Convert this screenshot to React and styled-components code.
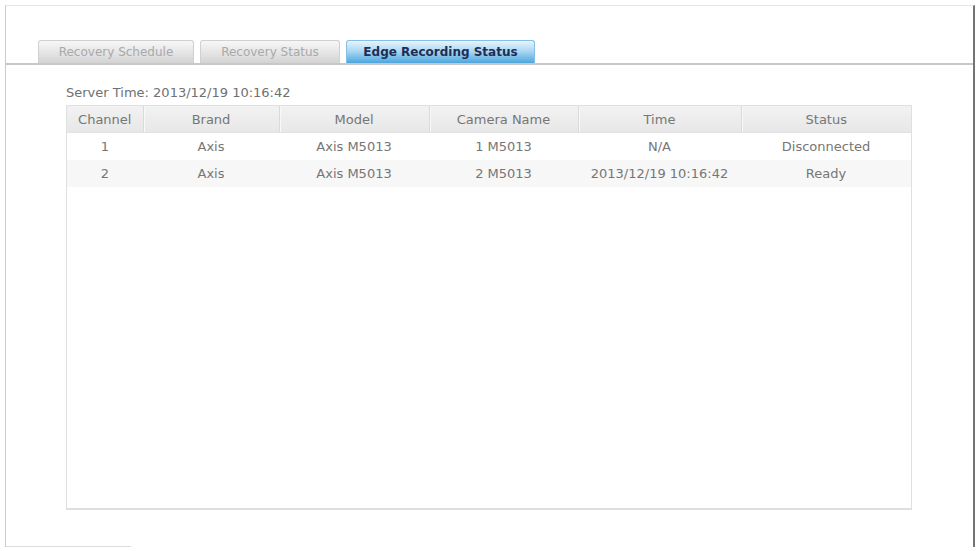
import styled, { createGlobalStyle } from "styled-components";

const GlobalStyle = createGlobalStyle`
  html, body {
    margin: 0;
    padding: 0;
    background: #ffffff;
  }
  body {
    font-family: "DejaVu Sans", Verdana, sans-serif;
  }
`;

const tabs = [
  { label: "Recovery Schedule", width: 156 },
  { label: "Recovery Status", width: 140 },
  { label: "Edge Recording Status", width: 189, active: true },
];

const columns = [
  { key: "channel", title: "Channel", width: 76 },
  { key: "brand", title: "Brand", width: 136 },
  { key: "model", title: "Model", width: 150 },
  { key: "camera", title: "Camera Name", width: 149 },
  { key: "time", title: "Time", width: 163 },
  { key: "status", title: "Status" },
];

const rows = [
  { channel: "1", brand: "Axis", model: "Axis M5013", camera: "1 M5013", time: "N/A", status: "Disconnected" },
  { channel: "2", brand: "Axis", model: "Axis M5013", camera: "2 M5013", time: "2013/12/19 10:16:42", status: "Ready" },
];

function App() {
  return (
    <>
      <GlobalStyle />
      <Frame>
        <TabBar>
          {tabs.map((tab) => (
            <Tab key={tab.label} $active={tab.active} $width={tab.width}>
              {tab.label}
            </Tab>
          ))}
        </TabBar>
        <Content>
          <ServerTime>Server Time: 2013/12/19 10:16:42</ServerTime>
          <TableBox>
            <Table>
              <colgroup>
                {columns.map((col) => (
                  <col key={col.key} style={col.width ? { width: col.width } : undefined} />
                ))}
              </colgroup>
              <thead>
                <tr>
                  {columns.map((col) => (
                    <HeadCell key={col.key}>{col.title}</HeadCell>
                  ))}
                </tr>
              </thead>
              <tbody>
                {rows.map((row, i) => (
                  <Row key={row.channel} $odd={i % 2 === 1}>
                    {columns.map((col) => (
                      <Cell key={col.key}>{row[col.key]}</Cell>
                    ))}
                  </Row>
                ))}
              </tbody>
            </Table>
          </TableBox>
        </Content>
        <BottomStub />
      </Frame>
    </>
  );
}

export default App;

const Frame = styled.div`
  margin: 5px 0 0 5px;
  width: 970px;
  height: 542px;
  box-sizing: border-box;
  border-top: 1px solid #e6e6e6;
  border-left: 1px solid #cbcbcb;
  border-right: 2px solid #747474;
  display: flex;
  flex-direction: column;
`;

const TabBar = styled.div`
  display: flex;
  align-items: flex-end;
  gap: 6px;
  height: 57px;
  padding-left: 32px;
  border-bottom: 2px solid #c8c8c8;
`;

const Tab = styled.div`
  width: ${(p) => p.$width}px;
  height: 23px;
  box-sizing: border-box;
  display: flex;
  align-items: center;
  justify-content: center;
  border: 1px solid ${(p) => (p.$active ? "#86bfe4" : "#d0d0d0")};
  border-bottom: none;
  border-radius: 3px 3px 0 0;
  font-size: 12px;
  font-weight: ${(p) => (p.$active ? "bold" : "normal")};
  color: ${(p) => (p.$active ? "#1f2d55" : "#a9a9a9")};
  background: ${(p) =>
    p.$active
      ? "linear-gradient(#e6f4fc 0%, #acd8f3 45%, #4da6de 100%)"
      : "linear-gradient(#f7f7f7 0%, #e4e4e4 55%, #d3d3d3 100%)"};
`;

const Content = styled.div`
  flex: 1;
  padding: 20px 61px 0 60px;
`;

const ServerTime = styled.div`
  font-size: 13px;
  line-height: 16px;
  color: #707070;
  margin-bottom: 4px;
`;

const TableBox = styled.div`
  height: 405px;
  box-sizing: border-box;
  border: 1px solid #e0e0e0;
  border-bottom: 2px solid #dedede;
`;

const Table = styled.table`
  width: 100%;
  border-collapse: collapse;
  table-layout: fixed;
`;

const HeadCell = styled.th`
  height: 26px;
  padding: 0;
  font-size: 13px;
  font-weight: normal;
  color: #767676;
  text-align: center;
  background: linear-gradient(#f2f2f2, #e7e7e7);
  border-left: 1px solid #dadada;
  border-bottom: 1px solid #e2e2e2;
  box-shadow: inset 1px 0 0 #f8f8f8;

  &:first-child {
    border-left: none;
    box-shadow: none;
  }
`;

const Row = styled.tr`
  background: ${(p) => (p.$odd ? "#f7f7f7" : "#ffffff")};
`;

const Cell = styled.td`
  height: 27px;
  padding: 0;
  font-size: 13px;
  color: #767676;
  text-align: center;
  white-space: nowrap;
`;

const BottomStub = styled.div`
  width: 125px;
  height: 1px;
  background: #dcdcdc;
`;
